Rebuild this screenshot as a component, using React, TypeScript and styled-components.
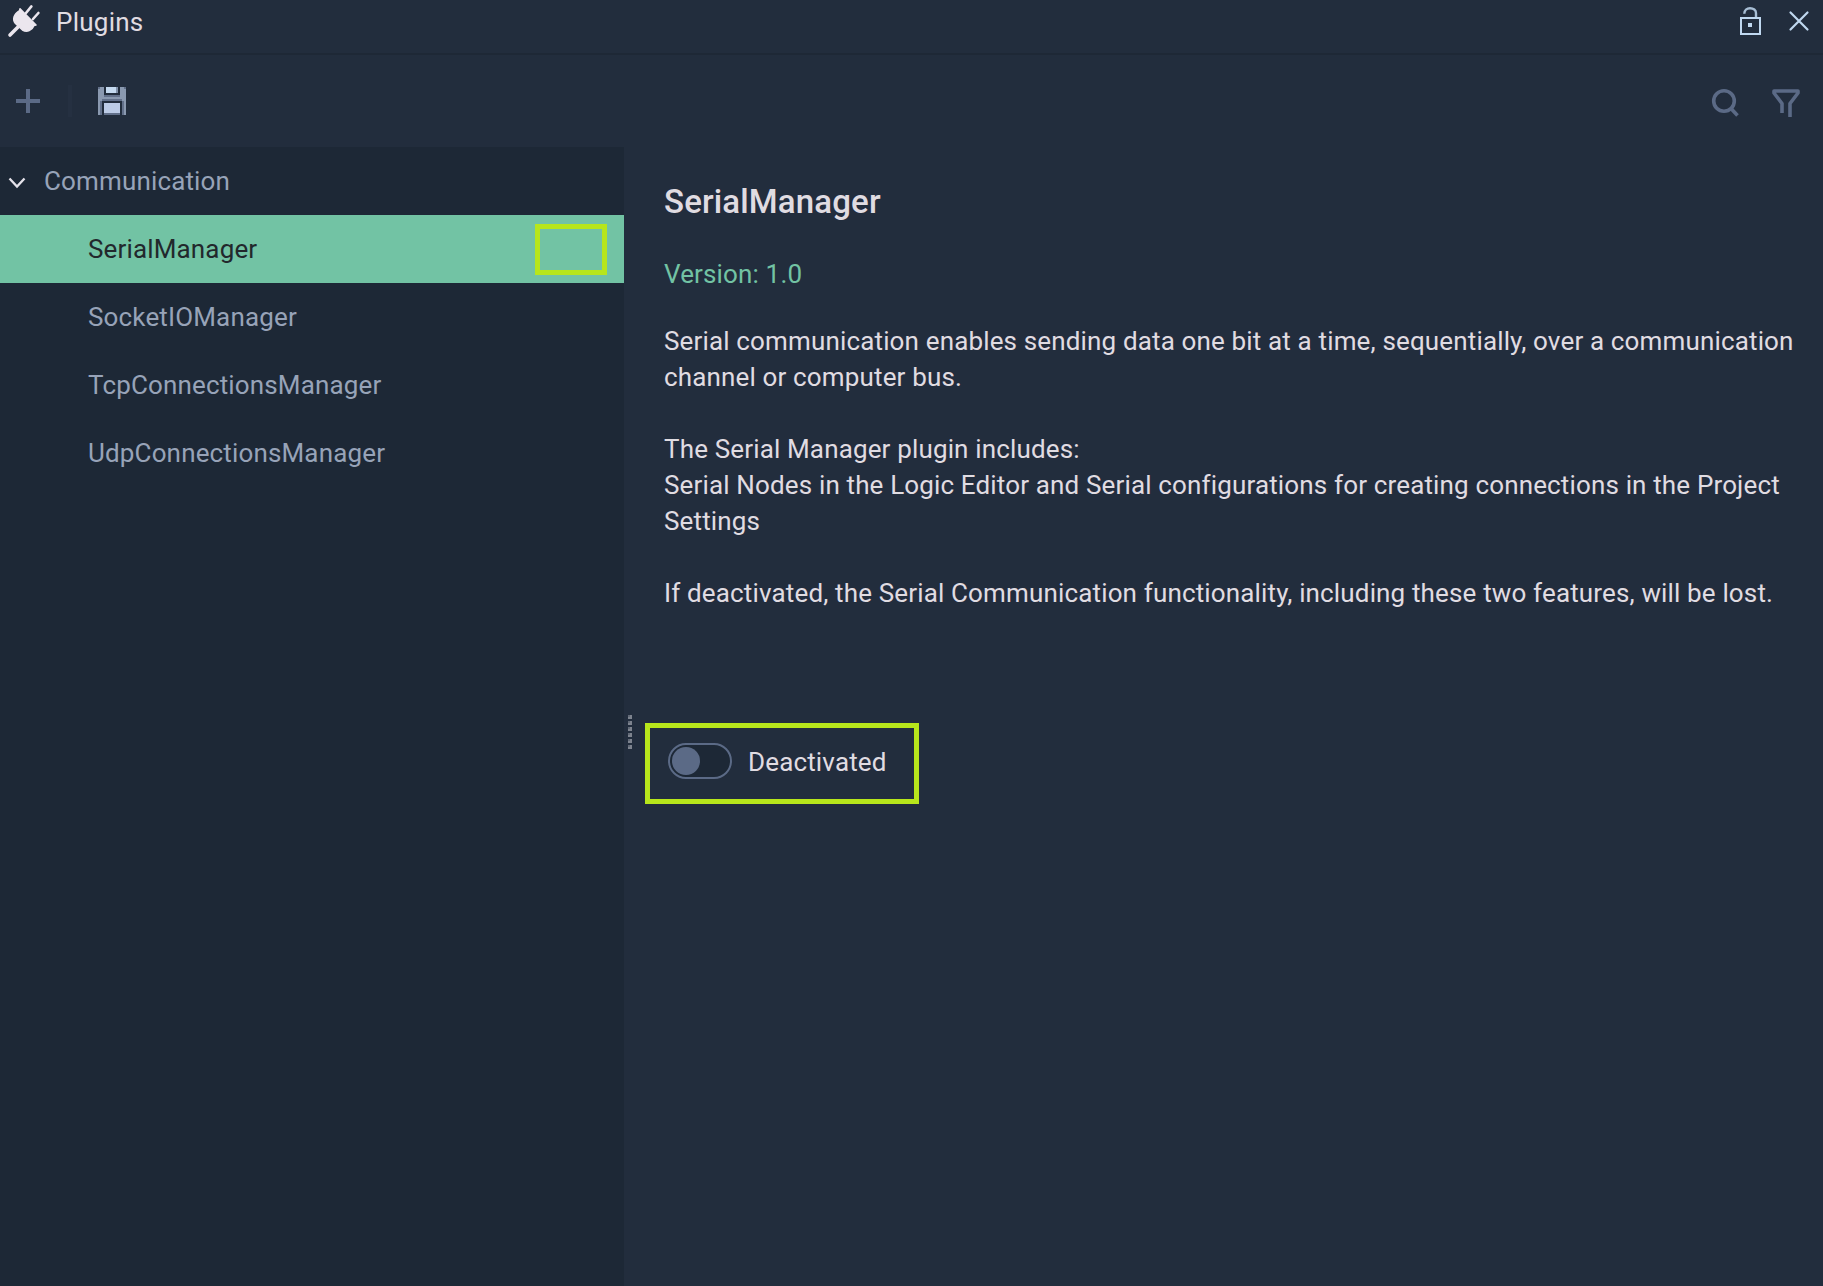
import React, { useState } from "react";
import styled, { createGlobalStyle } from "styled-components";

const color = {
  panel: "#222d3d",
  sidebar: "#1d2836",
  line: "#1e2836",
  accent: "#72c3a4",
  mark: "#b7e61b",
  text: "#e0dce2",
  muted: "#97a3b8",
  icon: "#5b6a86",
  iconBright: "#c0d8f0",
};

const GlobalStyle = createGlobalStyle`
  * { box-sizing: border-box; }
  body { margin: 0; background: ${color.panel}; }
`;

const Window = styled.div`
  display: flex;
  flex-direction: column;
  height: 100vh;
  overflow: hidden;
  background: ${color.panel};
  color: ${color.text};
  font-family: Roboto, "Liberation Sans", sans-serif;
  font-size: 26px;
  line-height: 36px;
  letter-spacing: 0.15px;
`;

const TitleBar = styled.header`
  display: flex;
  align-items: flex-start;
  height: 55px;
  padding: 4px 13px 0 6px;
  border-bottom: 2px solid ${color.line};
`;

const Title = styled.h1`
  flex: 1;
  margin: 0 0 0 14px;
  font: inherit;
  letter-spacing: 0.25px;
`;

const Toolbar = styled.div`
  display: flex;
  align-items: center;
  height: 92px;
  padding: 0 22px 0 14px;
`;

const IconButton = styled.button<{ $gap?: number; $drop?: number }>`
  display: flex;
  flex: none;
  margin: ${(p) => p.$drop ?? 0}px 0 0 ${(p) => p.$gap ?? 0}px;
  padding: 0;
  border: 0;
  background: none;
`;

const Divider = styled.span`
  width: 4px;
  height: 32px;
  margin-left: 26px;
  background: #253041;
`;

const Spacer = styled.span`
  flex: 1;
`;

const Body = styled.main`
  display: flex;
  flex: 1;
  min-height: 0;
`;

const Sidebar = styled.nav`
  flex: none;
  width: 624px;
  background: ${color.sidebar};
  color: ${color.muted};
`;

const GroupRow = styled.div`
  display: flex;
  align-items: center;
  height: 68px;
  padding-left: 7px;
  gap: 17px;
`;

const ItemRow = styled.div<{ $selected: boolean }>`
  display: flex;
  align-items: center;
  justify-content: space-between;
  height: 68px;
  padding: 0 17px 0 88px;
  background: ${(p) => (p.$selected ? color.accent : "transparent")};
  color: ${(p) => (p.$selected ? "#22282c" : "inherit")};
`;

const RowMark = styled.span`
  width: 72px;
  height: 51px;
  margin-top: 1px;
  border: 5px solid ${color.mark};
`;

const Splitter = styled.div`
  display: flex;
  flex: none;
  flex-direction: column;
  gap: 2px;
  width: 21px;
  padding: 568px 0 0 4px;
`;

const GripDot = styled.span`
  width: 4px;
  height: 4px;
  background: linear-gradient(#626a77, #626a77) 0 0 / 2px 2px no-repeat #7d838e;
`;

const Detail = styled.section`
  flex: 1;
  padding-top: 33px;
`;

const Heading = styled.h2`
  margin: 0 0 32px 19px;
  font-size: 33px;
  font-weight: 500;
  line-height: 44px;
`;

const Version = styled.p`
  margin: 0 0 31px 19px;
  color: ${color.accent};
`;

const Description = styled.p`
  height: 400px;
  margin: 0 0 0 19px;
  white-space: pre;
`;

const ToggleFrame = styled.label`
  display: flex;
  align-items: flex-start;
  gap: 16px;
  width: 274px;
  height: 81px;
  padding: 15px 0 0 18px;
  border: 5px solid ${color.mark};
`;

const ToggleText = styled.span`
  padding-top: 1px;
`;

const Track = styled.button<{ $on: boolean }>`
  display: flex;
  align-items: center;
  justify-content: ${(p) => (p.$on ? "flex-end" : "flex-start")};
  width: 64px;
  height: 36px;
  padding: 0 2px;
  border: 2px solid ${color.icon};
  border-radius: 18px;
  background: ${color.sidebar};
`;

const Knob = styled.span`
  width: 28px;
  height: 28px;
  border-radius: 50%;
  background: ${color.icon};
`;

const PlugIcon = () => (
  <svg width="36" height="36" viewBox="6 4 36 36" fill="#ebe6ee" stroke="#ebe6ee" strokeLinecap="round">
    <path d="M10 35L18 27" strokeWidth="3.6" />
    <path d="M26 13L31.4 6.4M33 19L38.4 13" strokeWidth="2.6" />
    <path d="M20 8.8L36 25L34 25.4C32 30.5 27 32.5 22.5 30L15.5 23.5C12 19 14 14 19.6 10.6Z" strokeWidth="1.6" strokeLinejoin="round" />
  </svg>
);

const LockIcon = () => (
  <svg width="24" height="32" viewBox="1738 5 24 32" fill="none" stroke={color.iconBright} strokeWidth="2">
    <rect x="1741" y="18" width="19" height="16" />
    <path d="M1744.3 13.800C1744.3 10 1747 8.200 1750 8.200C1753.500 8.200 1756 10 1756 13V17" strokeWidth="2.4" opacity=".85" />
    <rect x="1748" y="23" width="4" height="4" fill={color.iconBright} stroke="none" />
  </svg>
);

const CloseIcon = () => (
  <svg width="22" height="22" viewBox="1788 10 22 22" stroke={color.iconBright} strokeWidth="2.2" strokeLinecap="round">
    <path d="M1790.500 12.500L1807.500 29.500M1807.500 12.500L1790.500 29.500" />
  </svg>
);

const PlusIcon = () => (
  <svg width="28" height="28" viewBox="0 0 28 28" fill={color.icon} shapeRendering="crispEdges">
    <path d="M12 2h4v10h10v4H16v10h-4V16H2v-4h10z" />
  </svg>
);

const SaveIcon = () => (
  <svg width="28" height="28" viewBox="0 0 28 28" shapeRendering="crispEdges">
    <path fill="#8a99b0" d="M0 2h2V0h4v10h16V0h4v2h2v26H0z" />
    <path fill="#62708a" d="M6 8h16v2H6zM0 0h2v2H0zM26 0h2v2h-2zM2 14h2v14H2zM24 14h2v14h-2zM6 26h16v2H6zM4 12h20v2H4z" />
    <path fill={color.panel} d="M6 0h16v8H6zM4 14h20v12H4zM4 26h2v2H4zM22 26h2v2h-2z" />
    <path fill="#c5daf0" d="M8 0h10v6H8z" />
    <path fill="#8292ab" d="M18 0h2v6h-2z" />
    <path fill="#bccbe6" d="M6 16h16v10H6z" />
  </svg>
);

const SearchIcon = () => (
  <svg width="28" height="30" viewBox="1711 88 28 30" fill="none" stroke={color.icon} strokeWidth="3.6">
    <circle cx="1724" cy="101" r="10.3" />
    <path d="M1731 108.500L1737.500 115.500" />
  </svg>
);

const FilterIcon = () => (
  <svg width="30" height="30" viewBox="1771 88 30 30" fill="none" stroke={color.icon} strokeWidth="3.6" strokeLinejoin="round">
    <path d="M1782 113V103.500L1774 93V91H1798V93L1790 103.500V117" />
  </svg>
);

const ChevronIcon = () => (
  <svg width="20" height="16" viewBox="7 173 20 16" fill="none" stroke="#e4e2ea" strokeWidth="2.300">
    <path d="M9.500 178.500L17 186.500L24.500 178.500" />
  </svg>
);

const plugins = ["SerialManager", "SocketIOManager", "TcpConnectionsManager", "UdpConnectionsManager"];

const description = `Serial communication enables sending data one bit at a time, sequentially, over a communication
channel or computer bus.

The Serial Manager plugin includes:
Serial Nodes in the Logic Editor and Serial configurations for creating connections in the Project
Settings

If deactivated, the Serial Communication functionality, including these two features, will be lost.`;

export default function App() {
  const [selected, setSelected] = useState(plugins[0]);
  const [active, setActive] = useState(false);

  return (
    <Window>
      <GlobalStyle />
      <TitleBar>
        <PlugIcon />
        <Title>Plugins</Title>
        <IconButton aria-label="Lock" $drop={1}><LockIcon /></IconButton>
        <IconButton aria-label="Close" $gap={26} $drop={6}><CloseIcon /></IconButton>
      </TitleBar>
      <Toolbar>
        <IconButton aria-label="Add"><PlusIcon /></IconButton>
        <Divider />
        <IconButton aria-label="Save" $gap={26}><SaveIcon /></IconButton>
        <Spacer />
        <IconButton aria-label="Search" $drop={4}><SearchIcon /></IconButton>
        <IconButton aria-label="Filter" $gap={32} $drop={4}><FilterIcon /></IconButton>
      </Toolbar>
      <Body>
        <Sidebar>
          <GroupRow>
            <ChevronIcon />
            Communication
          </GroupRow>
          {plugins.map((name) => (
            <ItemRow key={name} $selected={name === selected} onClick={() => setSelected(name)}>
              {name}
              {name === selected && <RowMark />}
            </ItemRow>
          ))}
        </Sidebar>
        <Splitter>
          {Array.from({ length: 6 }, (_, i) => (
            <GripDot key={i} />
          ))}
        </Splitter>
        <Detail>
          <Heading>{selected}</Heading>
          <Version>Version: 1.0</Version>
          <Description>{description}</Description>
          <ToggleFrame>
            <Track $on={active} onClick={() => setActive(!active)}>
              <Knob />
            </Track>
            <ToggleText>{active ? "Activated" : "Deactivated"}</ToggleText>
          </ToggleFrame>
        </Detail>
      </Body>
    </Window>
  );
}
